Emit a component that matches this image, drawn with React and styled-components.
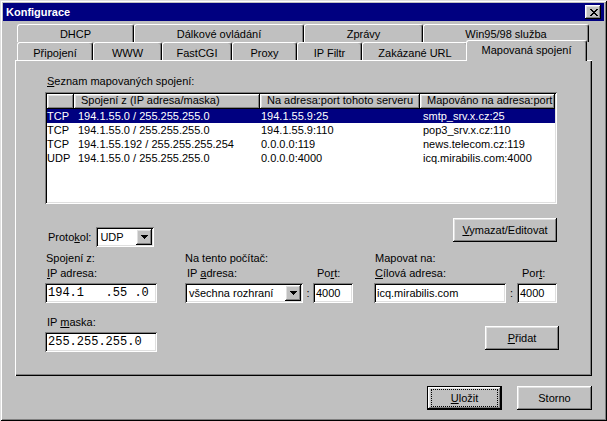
import React from "react";
import styled, { createGlobalStyle, css } from "styled-components";

const Global = createGlobalStyle`
  html, body { margin: 0; padding: 0; background: #c0c0c0; }
  body { font-family: "Liberation Sans", Arial, sans-serif; font-size: 11px; color: #000; }
  * { box-sizing: border-box; }
`;

const raised = css`
  box-shadow: inset -1px -1px #000, inset 1px 1px #fff, inset -2px -2px #808080, inset 2px 2px #dfdfdf;
`;
const sunken = css`
  box-shadow: inset 1px 1px #808080, inset -1px -1px #fff, inset 2px 2px #000, inset -2px -2px #dfdfdf;
`;

const Window = styled.div`
  width: 607px;
  height: 421px;
  background: #c0c0c0;
  padding: 3px;
  display: flex;
  flex-direction: column;
  box-shadow: inset 1px 1px #dfdfdf, inset -1px -1px #000, inset 2px 2px #fff, inset -2px -2px #808080;
`;

const TitleBar = styled.div`
  height: 18px;
  flex: none;
  background: #000080;
  color: #fff;
  display: flex;
  align-items: center;
  justify-content: space-between;
  padding: 0 3px 0 3px;
`;

const TitleText = styled.span`
  font-weight: bold;
  font-size: 11px;
  line-height: 18px;
`;

const CloseButton = styled.div`
  width: 16px;
  height: 14px;
  background: #c0c0c0;
  ${raised};
  display: flex;
  align-items: center;
  justify-content: center;
  padding-left: 1px;
`;

const Body = styled.div`
  flex: 1;
  display: flex;
  flex-direction: column;
  padding: 3px 12px 0 12px;
`;

const TabStrip = styled.div`
  display: flex;
  flex-direction: column;
  padding-left: 2px;
`;

const TabRow = styled.div`
  display: flex;
  height: 18px;
  align-items: flex-start;
`;

const Tab = styled.div`
  flex: none;
  width: ${(p) => p.$w}px;
  height: ${(p) => (p.$selected ? 21 : 18)}px;
  background: #c0c0c0;
  border-top: 1px solid #fff;
  border-left: 1px solid #fff;
  border-right: 1px solid #000;
  border-radius: 3px 3px 0 0;
  box-shadow: inset -1px 0 #808080;
  text-align: center;
  line-height: 13px;
  white-space: nowrap;
  padding-top: ${(p) => p.$pad}px;
  ${(p) =>
    p.$selected &&
    css`
      margin: -2px -2px -1px -2px;
      position: relative;
      z-index: 2;
    `}
`;

const Panel = styled.div`
  height: 316px;
  flex: none;
  padding: 15px 35px 0 30px;
  display: flex;
  flex-direction: column;
  box-shadow: inset 1px 1px #fff, inset -1px -1px #000, inset -2px -2px #808080;
`;

const Label = styled.div`
  line-height: ${(p) => p.$lh || 13}px;
  margin-left: ${(p) => p.$indent ?? 1}px;
  margin-top: ${(p) => p.$mt ?? 0}px;
  white-space: nowrap;
`;

const Acc = styled.span`
  text-decoration: underline;
`;

const ListBox = styled.div`
  margin-top: 4px;
  height: 112px;
  background: #fff;
  ${sunken};
  padding: 2px;
  display: flex;
  flex-direction: column;
`;

const HeaderRow = styled.div`
  display: flex;
  height: 15px;
`;

const HeaderCell = styled.div`
  flex: ${(p) => (p.$w ? `0 0 ${p.$w}px` : "1")};
  background: #c0c0c0;
  ${raised};
  padding-left: 7px;
  line-height: 13px;
  white-space: nowrap;
  overflow: hidden;
`;

const Row = styled.div`
  display: grid;
  grid-template-columns: 31px 183px 162px 1fr;
  height: 14px;
  line-height: 14px;
  white-space: nowrap;
  background: ${(p) => (p.$sel ? "#000080" : "transparent")};
  color: ${(p) => (p.$sel ? "#fff" : "#000")};
`;

const ActionRow = styled.div`
  margin-top: 14px;
  display: flex;
  justify-content: space-between;
  align-items: flex-start;
`;

const ProtocolGroup = styled.div`
  margin-top: 9px;
  display: flex;
  align-items: center;
`;

const Button = styled.button`
  flex: none;
  width: ${(p) => p.$w}px;
  height: 24px;
  background: #c0c0c0;
  border: ${(p) => (p.$default ? "1px solid #000" : "0")};
  ${raised};
  font: inherit;
  color: #000;
  padding: 0;
  margin: ${(p) => p.$margin || "0"};
  align-self: ${(p) => p.$align || "auto"};
  position: relative;
  line-height: 13px;
  ${(p) =>
    p.$default &&
    css`
      &::after {
        content: "";
        position: absolute;
        inset: 2px 3px;
        border: 1px dotted #000;
      }
    `}
`;

const Combo = styled.div`
  flex: none;
  width: ${(p) => p.$w}px;
  height: 20px;
  margin-left: ${(p) => p.$ml || 0}px;
  margin-top: ${(p) => p.$mt || 0}px;
  background: #fff;
  ${sunken};
  padding: 2px;
  display: flex;
  align-items: center;
`;

const ComboText = styled.span`
  flex: 1;
  padding-left: 2px;
  line-height: 16px;
  white-space: nowrap;
  overflow: hidden;
`;

const DropButton = styled.div`
  width: 16px;
  height: 16px;
  flex: none;
  background: #c0c0c0;
  ${raised};
  display: flex;
  align-items: center;
  justify-content: center;
`;

const Edit = styled.div`
  width: ${(p) => (p.$w ? `${p.$w}px` : "100%")};
  height: 20px;
  margin-top: ${(p) => p.$mt ?? 3}px;
  background: #fff;
  ${sunken};
  padding-left: 3px;
  line-height: 20px;
  white-space: pre;
  overflow: hidden;
  ${(p) =>
    p.$mono &&
    css`
      font-family: "Liberation Mono", "Courier New", monospace;
      font-size: 12px;
    `}
`;

const FieldsRow = styled.div`
  margin-top: 5px;
  display: flex;
  align-items: flex-start;
`;

const Column = styled.div`
  flex: none;
  width: ${(p) => p.$w}px;
  margin-left: ${(p) => p.$ml || 0}px;
  display: flex;
  flex-direction: column;
`;

const SubRow = styled.div`
  margin-top: 2px;
  display: flex;
  align-items: flex-end;
`;

const SubCol = styled.div`
  flex: none;
  width: ${(p) => p.$w}px;
  display: flex;
  flex-direction: column;
`;

const Colon = styled.span`
  flex: none;
  width: ${(p) => p.$w}px;
  line-height: 20px;
  text-align: center;
`;

const Footer = styled.div`
  margin-top: 10px;
  display: flex;
  justify-content: flex-end;
  gap: 15px;
`;

const closeRows = ["XX....XX", ".XX..XX.", "..XXXX..", "...XX...", "..XXXX..", ".XX..XX.", "XX....XX"];

const CloseGlyph = () => (
  <svg width="8" height="7" viewBox="0 0 8 7" shapeRendering="crispEdges">
    {closeRows.flatMap((r, y) =>
      r.split("").map((c, x) => (c === "X" ? <rect key={`${x}-${y}`} x={x} y={y} width="1" height="1" fill="#000" /> : null))
    )}
  </svg>
);

const Arrow = () => (
  <svg width="7" height="4" viewBox="0 0 7 4" shapeRendering="crispEdges">
    <rect x="0" y="0" width="7" height="1" fill="#000" />
    <rect x="1" y="1" width="5" height="1" fill="#000" />
    <rect x="2" y="2" width="3" height="1" fill="#000" />
    <rect x="3" y="3" width="1" height="1" fill="#000" />
  </svg>
);

const backTabs = [
  ["DHCP", 117],
  ["Dálkové ovládání", 170],
  ["Zprávy", 119],
  ["Win95/98 služba", 166],
];
const frontTabs = [
  ["Připojení", 76],
  ["WWW", 69],
  ["FastCGI", 70],
  ["Proxy", 65],
  ["IP Filtr", 65],
  ["Zakázané URL", 106],
  ["Mapovaná spojení", 121, true],
];

const rows = [
  ["TCP", "194.1.55.0 / 255.255.255.0", "194.1.55.9:25", "smtp_srv.x.cz:25"],
  ["TCP", "194.1.55.0 / 255.255.255.0", "194.1.55.9:110", "pop3_srv.x.cz:110"],
  ["TCP", "194.1.55.192 / 255.255.255.254", "0.0.0.0:119", "news.telecom.cz:119"],
  ["UDP", "194.1.55.0 / 255.255.255.0", "0.0.0.0:4000", "icq.mirabilis.com:4000"],
];

export default function App() {
  return (
    <>
      <Global />
      <Window>
        <TitleBar>
          <TitleText>Konfigurace</TitleText>
          <CloseButton>
            <CloseGlyph />
          </CloseButton>
        </TitleBar>
        <Body>
          <TabStrip>
            <TabRow>
              {backTabs.map(([t, w]) => (
                <Tab key={t} $w={w} $pad={3}>
                  {t}
                </Tab>
              ))}
            </TabRow>
            <TabRow>
              {frontTabs.map(([t, w, sel]) => (
                <Tab key={t} $w={w} $selected={sel} $pad={sel ? 3 : 4}>
                  {t}
                </Tab>
              ))}
            </TabRow>
          </TabStrip>
          <Panel>
            <Label $indent={2}>
              <Acc>S</Acc>eznam mapovaných spojení:
            </Label>
            <ListBox>
              <HeaderRow>
                <HeaderCell $w={27} />
                <HeaderCell $w={186}>Spojení z (IP adresa/maska)</HeaderCell>
                <HeaderCell $w={160}>Na adresa:port tohoto serveru</HeaderCell>
                <HeaderCell>Mapováno na adresa:port</HeaderCell>
              </HeaderRow>
              {rows.map((r, i) => (
                <Row key={i} $sel={i === 0}>
                  {r.map((c, j) => (
                    <span key={j}>{c}</span>
                  ))}
                </Row>
              ))}
            </ListBox>
            <ActionRow>
              <ProtocolGroup>
                <Label $indent={3} $lh={20}>
                  Proto<Acc>k</Acc>ol:
                </Label>
                <Combo $w={58} $ml={5}>
                  <ComboText>UDP</ComboText>
                  <DropButton>
                    <Arrow />
                  </DropButton>
                </Combo>
              </ProtocolGroup>
              <Button $w={104}>
                <Acc>V</Acc>ymazat/Editovat
              </Button>
            </ActionRow>
            <FieldsRow>
              <Column $w={112}>
                <Label>Spojení z:</Label>
                <Label $mt={2} $indent={2}>
                  <Acc>I</Acc>P adresa:
                </Label>
                <Edit $mono>{"194.1   .55 .0"}</Edit>
                <Label $mt={13} $indent={2}>
                  IP <Acc>m</Acc>aska:
                </Label>
                <Edit $mono>255.255.255.0</Edit>
              </Column>
              <Column $w={168} $ml={28}>
                <Label $indent={0}>Na tento počítač:</Label>
                <SubRow>
                  <SubCol $w={118}>
                    <Label $indent={2}>
                      IP <Acc>a</Acc>dresa:
                    </Label>
                    <Combo $w={118} $mt={3}>
                      <ComboText>všechna rozhraní</ComboText>
                      <DropButton>
                        <Arrow />
                      </DropButton>
                    </Combo>
                  </SubCol>
                  <Colon $w={10}>:</Colon>
                  <SubCol $w={40}>
                    <Label $indent={4}>
                      Po<Acc>r</Acc>t:
                    </Label>
                    <Edit>4000</Edit>
                  </SubCol>
                </SubRow>
              </Column>
              <Column $w={183} $ml={21}>
                <Label>Mapovat na:</Label>
                <SubRow>
                  <SubCol $w={132}>
                    <Label $indent={1}>
                      <Acc>C</Acc>ílová adresa:
                    </Label>
                    <Edit>icq.mirabilis.com</Edit>
                  </SubCol>
                  <Colon $w={11}>:</Colon>
                  <SubCol $w={40}>
                    <Label $indent={5}>
                      Por<Acc>t</Acc>:
                    </Label>
                    <Edit>4000</Edit>
                  </SubCol>
                </SubRow>
                <Button $w={74} $align="flex-end" $margin="23px -2px 0 0">
                  <Acc>P</Acc>řidat
                </Button>
              </Column>
            </FieldsRow>
          </Panel>
          <Footer>
            <Button $w={75} $default>
              <Acc>U</Acc>ložit
            </Button>
            <Button $w={75}>Storno</Button>
          </Footer>
        </Body>
      </Window>
    </>
  );
}
